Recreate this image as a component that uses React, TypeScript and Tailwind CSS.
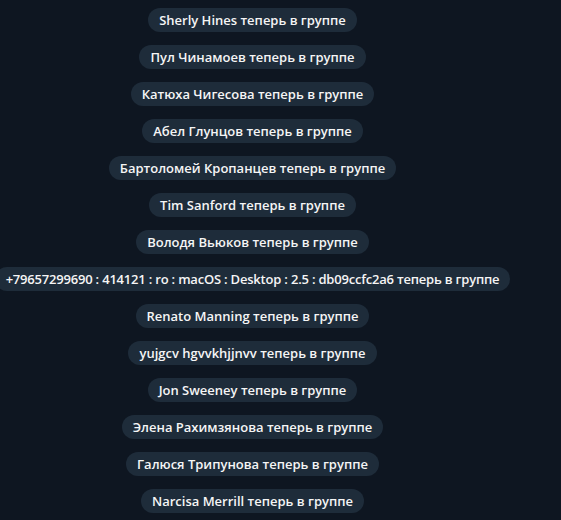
import React from 'react';

const names = [
  'Sherly Hines',
  'Пул Чинамоев',
  'Катюха Чигесова',
  'Абел Глунцов',
  'Бартоломей Кропанцев',
  'Tim Sanford',
  'Володя Вьюков',
  '+79657299690 : 414121 : ro : macOS : Desktop : 2.5 : db09ccfc2a6',
  'Renato Manning',
  'yujgcv hgvvkhjjnvv',
  'Jon Sweeney',
  'Элена Рахимзянова',
  'Галюся Трипунова',
  'Narcisa Merrill',
];

export default function App() {
  return (
    <div className="w-[561px] h-[520px] overflow-hidden bg-[#0e1621]" style={{ fontFamily: '"Open Sans", sans-serif' }}>
      <div className="w-[505px] flex flex-col items-center gap-[13px] pt-[8px]">
        {names.map((n, i) => (
          <div
            key={i}
            className={
              'shrink-0 whitespace-nowrap rounded-full bg-[#1e2c3a] px-[11px] h-[24px] leading-[24px] text-[13px] font-semibold text-[#f5f5f5] ' +
              (n.length > 40 ? 'tracking-[-0.2px]' : '')
            }
          >
            {n} теперь в группе
          </div>
        ))}
      </div>
    </div>
  );
}
